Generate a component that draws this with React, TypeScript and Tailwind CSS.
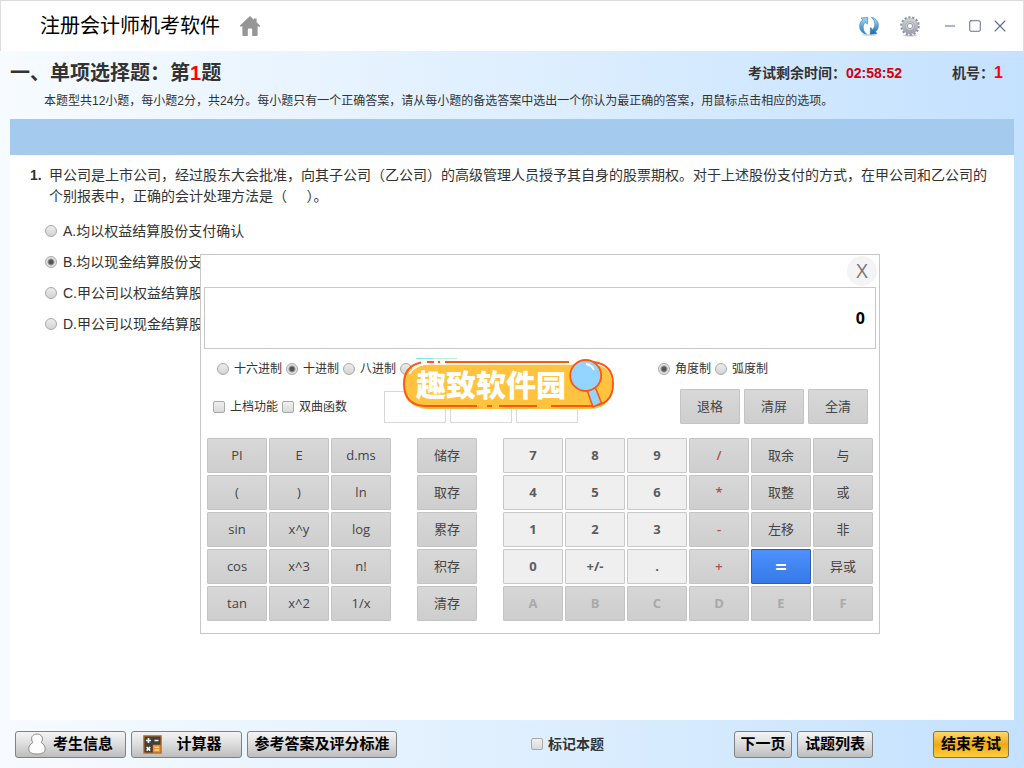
import { useState } from 'react'
import { Minus, Square, X } from 'lucide-react'

const RADIO =
  'size-3 shrink-0 appearance-none rounded-full border border-[#a8a8a8] bg-linear-to-b from-[#ececec] to-[#d4d4d4] checked:bg-[radial-gradient(circle,#555_0_2px,#e4e4e4_4px)]'
const CHECKBOX =
  'size-3 shrink-0 appearance-none rounded-xs border border-[#a8a8a8] bg-linear-to-b from-[#f0f0f0] to-[#d9d9d9] checked:from-[#5a5a5a] checked:to-[#5a5a5a]'
const KEY =
  'h-[35px] w-[60px] rounded-[1px] border border-[#c4c4c4] bg-linear-to-b from-[#d8d8d8] to-[#cecece] text-[13px] text-[#444]'
const NUMBER_KEY =
  'h-[35px] w-[60px] rounded-[1px] border border-[#c8c8c8] bg-[#efefef] text-[13px] font-bold text-[#5c5c5c]'
const OPERATOR_KEY =
  'h-[35px] w-[60px] rounded-[1px] border border-[#c4c4c4] bg-linear-to-b from-[#d8d8d8] to-[#cecece] text-[13px] font-semibold text-[#b8494c]'
const DISABLED_KEY =
  'h-[35px] w-[60px] rounded-[1px] border border-[#c4c4c4] bg-linear-to-b from-[#d6d6d6] to-[#cecece] text-[13px] font-bold text-[#a9a9a9]'
const EQUALS_KEY =
  'h-[35px] w-[60px] rounded-[1px] border border-[#2f5bb7] bg-linear-to-b from-[#4d90fe] to-[#357ae8] text-xl font-bold text-white'
const FOOTER_BUTTON =
  'flex h-[27px] items-center justify-center rounded-[3px] border border-[#7d8287] bg-linear-to-b from-[#f4f4f4] via-[#dcdcdc] to-[#bdbdbd] text-[15px] font-bold text-black'

const OPTIONS = [
  { id: 'A', text: 'A.均以权益结算股份支付确认' },
  { id: 'B', text: 'B.均以现金结算股份支' },
  { id: 'C', text: 'C.甲公司以权益结算股' },
  { id: 'D', text: 'D.甲公司以现金结算股' },
]

const FUNCTION_KEYS = ['PI', 'E', 'd.ms', '(', ')', 'ln', 'sin', 'x^y', 'log', 'cos', 'x^3', 'n!', 'tan', 'x^2', '1/x']
const MEMORY_KEYS = ['储存', '取存', '累存', '积存', '清存']
const MAIN_KEYS = [
  '7', '8', '9', '/', '取余', '与',
  '4', '5', '6', '*', '取整', '或',
  '1', '2', '3', '-', '左移', '非',
  '0', '+/-', '.', '+', '=', '异或',
  'A', 'B', 'C', 'D', 'E', 'F',
]

function mainKeyClass(key: string) {
  if (key === '=') return EQUALS_KEY
  if (/^[A-F]$/.test(key)) return DISABLED_KEY
  if (/^[0-9]$/.test(key) || key === '+/-' || key === '.') return NUMBER_KEY
  if (['/', '*', '-', '+'].includes(key)) return OPERATOR_KEY
  return KEY
}

function HomeIcon() {
  return (
    <svg width="20" height="20" viewBox="0 0 20 20" fill="#969696">
      <path d="M10 0 L14 3.8 V2.5 H16.6 V6.3 L20 9.6 V10.6 H17.6 V19 Q17.6 20 16.6 20 H12.2 V13.6 Q12.2 12.6 11.2 12.6 H8.8 Q7.8 12.6 7.8 13.6 V20 H3.4 Q2.4 20 2.4 19 V10.6 H0 V9.6 Z" />
    </svg>
  )
}

function RefreshIcon() {
  return (
    <svg width="20" height="20" viewBox="0 0 20 20">
      <defs>
        <linearGradient id="refresh-light" x1="0" y1="0" x2="0" y2="1">
          <stop offset="0" stopColor="#a5dcf7" />
          <stop offset="1" stopColor="#2379bd" />
        </linearGradient>
        <linearGradient id="refresh-dark" x1="0" y1="0" x2="0" y2="1">
          <stop offset="0" stopColor="#c3e6f8" />
          <stop offset="1" stopColor="#0f62b0" />
        </linearGradient>
      </defs>
      <ellipse cx="10" cy="19" rx="7.5" ry="0.9" fill="#d9dde2" />
      <path
        d="M7.6 18.2 C3 17.4 0.6 14 0.7 10 C0.8 7.2 1.9 5.2 3.6 3.8 L2 2 L8.8 1.4 L8.4 8 L6.4 6.2 C4.7 7.8 3.9 9.8 4.2 12.2 C4.5 14.8 5.6 16.6 7.6 18.2 Z"
        fill="url(#refresh-light)"
        stroke="#3c8cc6"
        strokeWidth="0.7"
      />
      <path
        d="M12.4 1.4 C17 2.2 19.4 5.6 19.3 9.6 C19.2 12.4 18.1 14.4 16.4 15.8 L18 17.6 L11.2 18.2 L11.6 11.6 L13.6 13.4 C15.3 11.8 16.1 9.8 15.8 7.4 C15.5 4.8 14.4 3 12.4 1.4 Z"
        fill="url(#refresh-dark)"
        stroke="#2f7cbc"
        strokeWidth="0.7"
      />
    </svg>
  )
}

function GearIcon() {
  return (
    <svg width="20" height="21" viewBox="0 0 20 21">
      <defs>
        <linearGradient id="gear-body" x1="0" y1="0" x2="0" y2="1">
          <stop offset="0" stopColor="#d5d7dc" />
          <stop offset="1" stopColor="#989dab" />
        </linearGradient>
      </defs>
      <ellipse cx="10" cy="19.6" rx="7" ry="1" fill="#c9c9c9" />
      <circle cx="10" cy="10" r="8.6" fill="none" stroke="#8f939e" strokeWidth="2.4" strokeDasharray="2.2 1.66" />
      <circle cx="10" cy="10" r="7.8" fill="url(#gear-body)" stroke="#a5a9b3" strokeWidth="0.6" />
      <circle cx="10" cy="10" r="4.4" fill="#cfd1d7" stroke="#9a9eaa" strokeWidth="0.6" />
      <circle cx="10" cy="10" r="2.6" fill="#fbfbfb" stroke="#858995" strokeWidth="0.8" />
    </svg>
  )
}

function CandidateIcon() {
  return (
    <svg width="18" height="22" viewBox="0 0 18 22">
      <path
        d="M9 1 C12.4 1 14.6 3.2 14.4 6 C14.3 7.6 13.8 8.6 13.2 9.6 C15.8 11 17.2 13.2 17.2 16 C17.2 19.2 14.6 21 9 21 C3.4 21 0.8 19.2 0.8 16 C0.8 13.2 2.2 11 4.8 9.6 C4.2 8.6 3.7 7.6 3.6 6 C3.4 3.2 5.6 1 9 1 Z"
        fill="#fdfdfd"
        stroke="#8e8e8e"
      />
    </svg>
  )
}

function CalculatorIcon() {
  return (
    <svg width="19" height="19" viewBox="0 0 19 19">
      <rect width="19" height="19" rx="1" fill="#d9811f" />
      <rect x="1.4" y="1.4" width="16.2" height="16.2" fill="#423e3b" />
      <rect x="9.8" y="9.8" width="7.8" height="7.8" fill="#ee8f22" />
      <path d="M3 5.5 H8 M5.5 3 V8 M11.5 5.5 H15.5" stroke="#fff" strokeWidth="1.6" />
      <path d="M3.6 12 L7.2 15.6 M7.2 12 L3.6 15.6" stroke="#fff" strokeWidth="1.6" />
      <path d="M11.5 12.4 H16 M11.5 15 H16" stroke="#ffe2b8" strokeWidth="1.4" />
    </svg>
  )
}

function SiteBadge() {
  return (
    <svg className="absolute left-[202px] top-[102px]" width="212" height="54" viewBox="0 0 212 54">
      <path d="M13 1.5 H30" stroke="#7fe3e8" />
      <path d="M30 1.5 H54" stroke="#b6f0cd" />
      <path d="M24 7.5 H188 Q209 8 209 28 Q209 52 186 52 H24 Q1 50 1 29 Q1 9 24 7.5 Z" fill="#ffc340" />
      <path d="M6 17 Q12 8.5 22 7 H168" fill="none" stroke="#fff" strokeWidth="1.6" />
      <path
        d="M18 5.5 Q1 9 1 27 Q1 49 24 49 H74 M84 49 H89 M96 49 H134 M148 49 H186 Q210 49 210 27 Q210 7 190 5 M42 5 H166 M24 5 H31 M35 5 H37"
        fill="none"
        stroke="#ff5614"
        strokeWidth="2"
      />
      <text
        x="13"
        y="39"
        fill="#fff"
        fontSize="30"
        fontWeight="900"
        fontFamily="'Noto Sans CJK SC', sans-serif"
      >
        趣致软件园
      </text>
      <path d="M184 33 L192 30 L198.5 46 L190 50 Z" fill="#93d5ff" stroke="#ff5614" strokeWidth="1.6" />
      <circle cx="182.7" cy="18.5" r="15.5" fill="#93d5ff" stroke="#ff5614" strokeWidth="1.8" />
      <path d="M183 7 Q189 8 191 13" fill="none" stroke="#fff" strokeWidth="1.8" />
    </svg>
  )
}

function Calculator({ onClose }: { onClose: () => void }) {
  return (
    <section
      aria-label="计算器"
      className="absolute left-[200px] top-[254px] w-[680px] border border-[#c8c8c8] bg-white pb-3 font-['Open_Sans','Noto_Sans_CJK_SC',sans-serif] text-xs text-[#333]"
    >
      <div className="flex h-8 items-center justify-end pr-0.5">
        <button
          type="button"
          aria-label="关闭"
          className="flex size-[30px] items-center justify-center rounded-full bg-[#f4f4f4] text-xl text-[#777]"
          onClick={onClose}
        >
          X
        </button>
      </div>
      <input
        aria-label="结果"
        className="mx-[3px] block h-[62px] w-[672px] border border-[#c8c8c8] px-2.5 text-right text-base font-bold text-black"
        defaultValue="0"
      />

      <div className="flex h-10 items-center pl-4">
        <div className="flex gap-1">
          <label className="flex items-center gap-[5px]">
            <input type="radio" name="base" className={RADIO} />
            十六进制
          </label>
          <label className="flex items-center gap-[5px]">
            <input type="radio" name="base" className={RADIO} defaultChecked />
            十进制
          </label>
          <label className="flex items-center gap-[5px]">
            <input type="radio" name="base" className={RADIO} />
            八进制
          </label>
          <input type="radio" name="base" aria-label="二进制" className={`${RADIO} self-center`} />
        </div>
        <div className="ml-auto flex gap-1 pr-[111px]">
          <label className="flex items-center gap-[5px]">
            <input type="radio" name="angle" className={RADIO} defaultChecked />
            角度制
          </label>
          <label className="flex items-center gap-[5px]">
            <input type="radio" name="angle" className={RADIO} />
            弧度制
          </label>
        </div>
      </div>

      <div className="flex items-center pl-3 pr-[11px]">
        <div className="flex gap-1">
          <label className="flex items-center gap-[5px]">
            <input type="checkbox" className={CHECKBOX} />
            上档功能
          </label>
          <label className="flex items-center gap-[5px]">
            <input type="checkbox" className={CHECKBOX} />
            双曲函数
          </label>
        </div>
        <div className="ml-[37px] flex gap-1">
          <input aria-label="存储" className="h-8 w-[62px] border border-[#d8d8d8]" />
          <input aria-label="括号" className="h-8 w-[62px] border border-[#d8d8d8]" />
          <input aria-label="运算符" className="h-8 w-[62px] border border-[#d8d8d8]" />
        </div>
        <div className="ml-auto flex gap-1">
          <button type="button" className={KEY}>退格</button>
          <button type="button" className={KEY}>清屏</button>
          <button type="button" className={KEY}>全清</button>
        </div>
      </div>

      <div className="mt-3.5 flex justify-between px-1.5">
        <div className="grid grid-cols-3 gap-0.5">
          {FUNCTION_KEYS.map((key) => (
            <button key={key} type="button" className={KEY}>
              {key}
            </button>
          ))}
        </div>
        <div className="grid gap-0.5">
          {MEMORY_KEYS.map((key) => (
            <button key={key} type="button" className={KEY}>
              {key}
            </button>
          ))}
        </div>
        <div className="grid grid-cols-6 gap-0.5">
          {MAIN_KEYS.map((key) => (
            <button key={key} type="button" className={mainKeyClass(key)} disabled={/^[A-F]$/.test(key)}>
              {key}
            </button>
          ))}
        </div>
      </div>
      <SiteBadge />
    </section>
  )
}

export default function App() {
  const [answer, setAnswer] = useState('B')
  const [showCalculator, setShowCalculator] = useState(true)

  return (
    <div className="relative flex min-h-screen flex-col bg-linear-to-r from-[#f7fbff] via-[#dfeffe] to-[#c4e1ff] font-['Liberation_Sans','Noto_Sans_CJK_SC',sans-serif] text-sm text-[#333]">
      <header className="flex h-[51px] items-center border border-b-0 border-[#dcdcdc] bg-white pl-[39px] pr-[13px]">
        <h1 className="text-xl text-black">注册会计师机考软件</h1>
        <a href="#" aria-label="首页" className="ml-5">
          <HomeIcon />
        </a>
        <div className="ml-auto flex items-center text-[#5f6f8c]">
          <button type="button" aria-label="刷新">
            <RefreshIcon />
          </button>
          <button type="button" aria-label="设置" className="ml-[21px]">
            <GearIcon />
          </button>
          <button type="button" aria-label="最小化" className="ml-[22px]">
            <Minus size={16} strokeWidth={1.5} />
          </button>
          <button type="button" aria-label="最大化" className="ml-2.5">
            <Square size={14} strokeWidth={1.7} />
          </button>
          <button type="button" aria-label="关闭窗口" className="ml-2">
            <X size={20} strokeWidth={1.3} />
          </button>
        </div>
      </header>

      <div className="px-2.5 pb-1 pt-2">
        <div className="flex h-7 items-center pr-[11px]">
          <h2 className="text-xl font-bold">
            一、单项选择题：第<span className="text-[#f00]">1</span>题
          </h2>
          <p className="ml-auto font-bold">
            考试剩余时间：<span className="text-[#d0000c]">02:58:52</span>
          </p>
          <p className="ml-[50px] font-bold">
            机号：<span className="text-base text-[#f00]">1</span>
          </p>
        </div>
        <p className="pl-[34px] text-xs leading-7">
          本题型共12小题，每小题2分，共24分。每小题只有一个正确答案，请从每小题的备选答案中选出一个你认为最正确的答案，用鼠标点击相应的选项。
        </p>
      </div>

      <main className="mx-2.5 flex-1 bg-white">
        <div className="h-9 bg-[#a4cbee]" />
        <div className="flex px-5 pt-2.5 leading-[21px]">
          <span className="w-[19px] shrink-0 font-bold">1.</span>
          <p>
            甲公司是上市公司，经过股东大会批准，向其子公司（乙公司）的高级管理人员授予其自身的股票期权。对于上述股份支付的方式，在甲公司和乙公司的个别报表中，正确的会计处理方法是（&nbsp;&nbsp;&nbsp;&nbsp;&nbsp;）。
          </p>
        </div>
        <div className="mt-2 pl-[35px]">
          {OPTIONS.map((option) => (
            <label key={option.id} className="flex h-[31px] items-center gap-1.5">
              <input
                type="radio"
                name="answer"
                className={RADIO}
                checked={answer === option.id}
                onChange={() => setAnswer(option.id)}
              />
              {option.text}
            </label>
          ))}
        </div>
      </main>

      <footer className="flex h-12 items-center gap-[5px] px-[15px]">
        <button type="button" className={`${FOOTER_BUTTON} w-[111px] gap-[7px]`}>
          <CandidateIcon />
          考生信息
        </button>
        <button
          type="button"
          className={`${FOOTER_BUTTON} w-[111px] gap-3.5 pr-2`}
          onClick={() => setShowCalculator(!showCalculator)}
        >
          <CalculatorIcon />
          计算器
        </button>
        <button type="button" className={`${FOOTER_BUTTON} w-[150px]`}>
          参考答案及评分标准
        </button>
        <label className="mx-auto flex items-center gap-[5px] pl-1 font-bold">
          <input type="checkbox" className={CHECKBOX} />
          标记本题
        </label>
        <button type="button" className={`${FOOTER_BUTTON} w-[58px]`}>
          下一页
        </button>
        <button type="button" className={`${FOOTER_BUTTON} w-[76px]`}>
          试题列表
        </button>
        <button
          type="button"
          className="ml-[55px] h-[27px] w-[76px] rounded-[3px] border border-[#7c7350] bg-linear-to-b from-[#ffd968] via-[#f0a80c] to-[#ffcf3c] text-[15px] font-bold text-black"
        >
          结束考试
        </button>
      </footer>

      {showCalculator && <Calculator onClose={() => setShowCalculator(false)} />}
    </div>
  )
}
